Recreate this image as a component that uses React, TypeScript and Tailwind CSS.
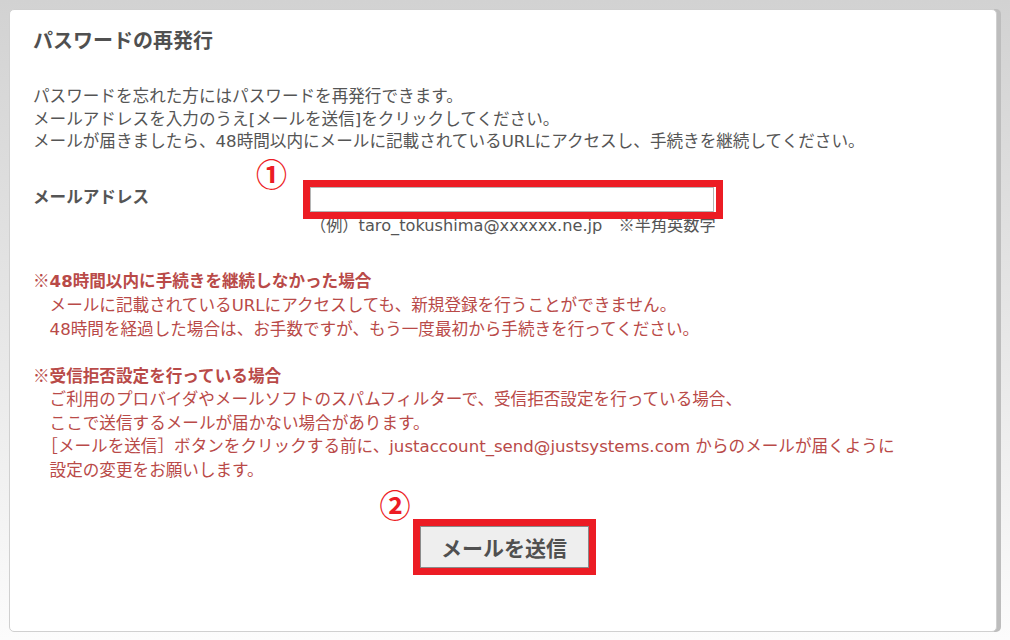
import React from "react";

const font = {
  fontFamily: '"DejaVu Sans", "Noto Sans CJK JP", sans-serif',
};

const cjk = { fontFamily: '"Noto Sans CJK JP", sans-serif' };

// ※ は全角グリフで出す
function Kome() {
  return <span style={cjk}>※</span>;
}

export default function App() {
  return (
    <div
      className="w-[1010px] h-[640px] bg-gradient-to-b from-[#d2d2d2] via-[#e6e6e6] to-[#fcfcfc] pt-[9px] pl-[9px] text-[#555]"
      style={font}
    >
      <div className="relative w-[988px] h-[623px] bg-white rounded-[5px] border border-[#d0d0d0] shadow-[4px_0_0_#bdbdbd] pl-[23px] pt-[16px] flex flex-col">
        {/* タイトル */}
        <h1 className="text-[20px] leading-[28px] font-bold text-[#505050]" style={cjk}>
          パスワードの再発行
        </h1>

        {/* 説明 */}
        <div className="mt-[32px] text-[16.6px] leading-[22.5px]">
          <p>パスワードを忘れた方にはパスワードを再発行できます。</p>
          <p>メールアドレスを入力のうえ[メールを送信]をクリックしてください。</p>
          <p>メールが届きましたら、48時間以内にメールに記載されているURLにアクセスし、手続きを継続してください。</p>
        </div>

        {/* メールアドレス */}
        <div className="mt-[30px] flex items-start">
          <div className="w-[277px] text-[16.6px] leading-[24px] font-bold" style={cjk}>
            メールアドレス
          </div>
          <div className="flex flex-col">
            <div className="relative mt-[3px] w-[404px] h-[25px]">
              <input
                type="text"
                className="w-full h-full bg-white border border-[#b5b5b5] outline-none"
              />
              <div className="absolute -left-[7px] -top-[7px] -right-[9px] -bottom-[7px] border-[7px] border-[#ec1c24]" />
              <span
                className="absolute -left-[54px] -top-[30px] text-[#ec1c24] text-[31px] leading-[32px] font-bold"
                style={cjk}
              >
                ①
              </span>
            </div>
            <p className="mt-[2px] text-[16.2px] leading-[20px]">
              （例）taro_tokushima@xxxxxx.ne.jp　<Kome />半角英数字
            </p>
          </div>
        </div>

        {/* 注意1 */}
        <div className="mt-[32px] text-[16.6px] leading-[24px] text-[#b94a48]">
          <p>
            <Kome />
            <span className="font-bold">48時間以内に手続きを継続しなかった場合</span>
          </p>
          <p>　メールに記載されているURLにアクセスしても、新規登録を行うことができません。</p>
          <p>　48時間を経過した場合は、お手数ですが、もう一度最初から手続きを行ってください。</p>
        </div>

        {/* 注意2 */}
        <div className="mt-[22px] text-[16.6px] leading-[23.5px] text-[#b94a48]">
          <p>
            <Kome />
            <span className="font-bold">受信拒否設定を行っている場合</span>
          </p>
          <p>　ご利用のプロバイダやメールソフトのスパムフィルターで、受信拒否設定を行っている場合、</p>
          <p>　ここで送信するメールが届かない場合があります。</p>
          <p>　［メールを送信］ボタンをクリックする前に、justaccount_send@justsystems.com からのメールが届くように</p>
          <p>　設定の変更をお願いします。</p>
        </div>

        {/* 送信ボタン */}
        <div className="mt-[44px] flex justify-center pr-[21px]">
          <div className="relative">
            <button
              className="w-[169px] h-[42px] bg-[#eeeeee] border border-[#8a8a8a] text-[21px] font-bold text-[#505050] leading-none"
              style={cjk}
            >
              メールを送信
            </button>
            <div className="absolute -left-[7px] -top-[7px] -right-[7px] -bottom-[7px] border-[7px] border-[#ec1c24]" />
            <span
              className="absolute -left-[40px] -top-[38px] text-[#ec1c24] text-[31px] leading-[32px] font-bold"
              style={cjk}
            >
              ②
            </span>
          </div>
        </div>
      </div>
    </div>
  );
}
